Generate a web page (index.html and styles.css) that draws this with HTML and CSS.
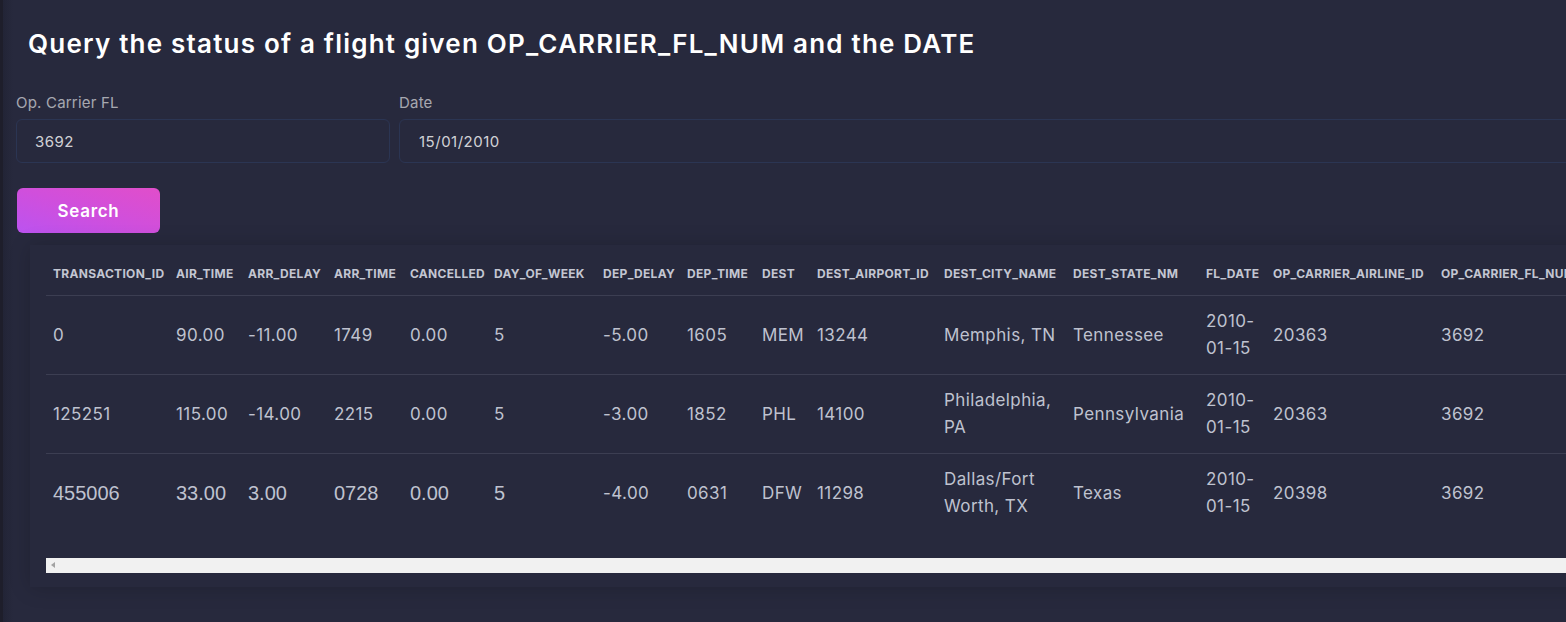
FILE: index.html
```html
<!DOCTYPE html>
<html lang="en">
<head>
<meta charset="utf-8">
<title>Flight status query</title>
<link rel="stylesheet" href="styles.css">
</head>
<body>
<div class="panel">
  <h3 class="title">Query the status of a flight given OP_CARRIER_FL_NUM and the DATE</h3>
  <form class="form">
    <div class="fields">
      <div class="field field-carrier">
        <label class="label" for="carrier">Op. Carrier FL</label>
        <input class="control" id="carrier" type="text" value="3692">
      </div>
      <div class="field field-date">
        <label class="label" for="date">Date</label>
        <input class="control control-date" id="date" type="text" value="15/01/2010">
      </div>
    </div>
    <button class="btn" type="button">Search</button>
  </form>
  <div class="table-card">
    <table class="table">
      <colgroup>
        <col><col><col><col><col><col><col><col><col><col><col><col><col><col><col>
      </colgroup>
      <thead>
        <tr>
          <th>TRANSACTION_ID</th><th>AIR_TIME</th><th>ARR_DELAY</th><th>ARR_TIME</th><th>CANCELLED</th><th>DAY_OF_WEEK</th><th>DEP_DELAY</th><th>DEP_TIME</th><th>DEST</th><th>DEST_AIRPORT_ID</th><th>DEST_CITY_NAME</th><th>DEST_STATE_NM</th><th>FL_DATE</th><th>OP_CARRIER_AIRLINE_ID</th><th>OP_CARRIER_FL_NUM</th>
        </tr>
      </thead>
      <tbody>
        <tr>
          <td>0</td><td>90.00</td><td>-11.00</td><td>1749</td><td>0.00</td><td>5</td><td>-5.00</td><td>1605</td><td>MEM</td><td>13244</td><td>Memphis, TN</td><td>Tennessee</td><td>2010-01-15</td><td>20363</td><td>3692</td>
        </tr>
        <tr>
          <td>125251</td><td>115.00</td><td>-14.00</td><td>2215</td><td>0.00</td><td>5</td><td>-3.00</td><td>1852</td><td>PHL</td><td>14100</td><td>Philadelphia, PA</td><td>Pennsylvania</td><td>2010-01-15</td><td>20363</td><td>3692</td>
        </tr>
        <tr>
          <td class="plain">455006</td><td class="plain">33.00</td><td class="plain">3.00</td><td class="plain">0728</td><td class="plain">0.00</td><td class="plain">5</td><td>-4.00</td><td>0631</td><td>DFW</td><td>11298</td><td>Dallas/Fort Worth, TX</td><td>Texas</td><td>2010-01-15</td><td>20398</td><td>3692</td>
        </tr>
      </tbody>
    </table>
    <div class="scrollbar"><span class="scroll-arrow"></span></div>
  </div>
</div>
</body>
</html>
```
FILE: styles.css
```css
html, body {
  margin: 0;
  padding: 0;
}

body {
  background: #1e1e2b;
  overflow: hidden;
  font-family: Inter, "Noto Sans", sans-serif;
  color: rgba(255, 255, 255, 0.8);
}

.panel {
  margin-left: 3px;
  width: 1760px;
  min-height: 622px;
  background: linear-gradient(to right, #222436 0, #27293d 10px);
  padding: 0 0 0 13px;
  box-sizing: border-box;
}

.title {
  margin: 0;
  padding: 28px 0 0 12px;
  font-size: 26px;
  line-height: 31px;
  font-weight: 600;
  letter-spacing: 1.2px;
  color: #ffffff;
}

.form {
  margin: 0;
  padding-top: 34px;
}

.fields {
  display: flex;
  gap: 9px;
}

.field {
  display: flex;
  flex-direction: column;
}

.field-carrier {
  width: 374px;
}

.field-date {
  flex: 1;
}

.label {
  font-size: 15px;
  line-height: 20px;
  letter-spacing: 0.2px;
  color: rgba(255, 255, 255, 0.6);
  margin-bottom: 6px;
}

.control {
  height: 44px;
  box-sizing: border-box;
  background: transparent;
  border: 1px solid #2b3553;
  border-radius: 6px;
  padding: 0 18px;
  font-family: inherit;
  font-size: 15px;
  letter-spacing: 0.5px;
  color: rgba(255, 255, 255, 0.8);
  outline: none;
}

.control-date {
  padding-left: 19px;
}

.btn {
  display: block;
  margin: 25px 0 0 1px;
  width: 143px;
  height: 45px;
  border: none;
  border-radius: 6px;
  background: linear-gradient(to bottom left, #e14eca 0%, #d04fdc 50%, #bb53f0 100%);
  color: #ffffff;
  font-family: inherit;
  font-size: 17px;
  font-weight: 600;
  letter-spacing: 0.7px;
}

.table-card {
  margin: 12px 0 0 14px;
  padding: 15px 0 14px 16px;
  background: #27293d;
  box-shadow: 0 1px 20px 0 rgba(0, 0, 0, 0.18);
}

.table {
  border-collapse: collapse;
  table-layout: fixed;
  width: 1540px;
}

.table col:nth-child(1) { width: 123px; }
.table col:nth-child(2) { width: 72px; }
.table col:nth-child(3) { width: 86px; }
.table col:nth-child(4) { width: 76px; }
.table col:nth-child(5) { width: 84px; }
.table col:nth-child(6) { width: 109px; }
.table col:nth-child(7) { width: 84px; }
.table col:nth-child(8) { width: 75px; }
.table col:nth-child(9) { width: 55px; }
.table col:nth-child(10) { width: 127px; }
.table col:nth-child(11) { width: 129px; }
.table col:nth-child(12) { width: 133px; }
.table col:nth-child(13) { width: 67px; }
.table col:nth-child(14) { width: 168px; }
.table col:nth-child(15) { width: 152px; }

.table th {
  padding: 6px 7px 14px;
  font-size: 12px;
  line-height: 15px;
  font-weight: 700;
  letter-spacing: 0.3px;
  text-align: left;
  white-space: nowrap;
  color: #c3c6d2;
  border-bottom: 1px solid #3c3e52;
}

.table td {
  padding: 12px 7px;
  font-size: 17px;
  line-height: 27px;
  letter-spacing: 0.4px;
  color: #bfc2cf;
  vertical-align: middle;
  border-top: 1px solid #3c3e52;
}

.table tbody tr:first-child td {
  border-top: none;
}

.table td.plain {
  font-family: "Liberation Sans", Arial, sans-serif;
  font-size: 20px;
  letter-spacing: 0;
}

.scrollbar {
  margin-top: 26px;
  height: 15px;
  background: #f1f1f1;
  position: relative;
}

.scroll-arrow {
  position: absolute;
  left: 5px;
  top: 4px;
  width: 0;
  height: 0;
  border-top: 3.5px solid transparent;
  border-bottom: 3.5px solid transparent;
  border-right: 4px solid #a3a3a3;
}
```
